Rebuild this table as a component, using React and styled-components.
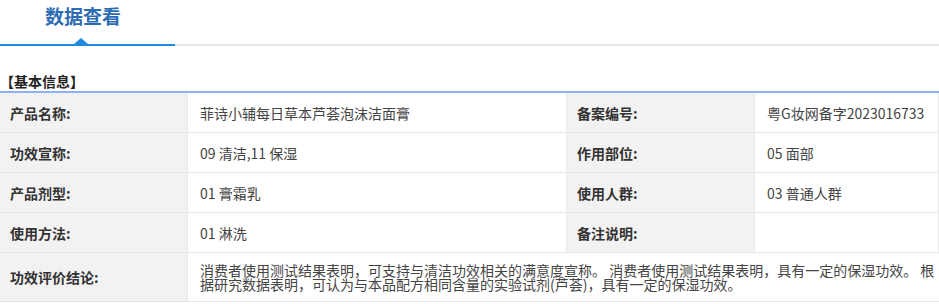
import React from 'react';
import styled, { createGlobalStyle } from 'styled-components';

const GlobalStyle = createGlobalStyle`
  body {
    margin: 0;
    background: #fff;
    font-family: "Noto Sans CJK SC", "Noto Sans", sans-serif;
    color: #333;
  }
`;

const TabBar = styled.div`
  display: flex;
  border-bottom: 2px solid #e6e6e6;
  height: 44px;
`;

const Tab = styled.div`
  position: relative;
  width: 175px;
  box-sizing: border-box;
  padding-left: 45px;
  font-size: 19px;
  font-weight: bold;
  line-height: 32px;
  color: #2d6cb4;
  border-bottom: 2px solid #1e88e0;
  margin-bottom: -2px;

  &::after {
    content: '';
    position: absolute;
    left: 74px;
    bottom: 0;
    border-left: 7px solid transparent;
    border-right: 7px solid transparent;
    border-bottom: 6px solid #1e88e0;
  }
`;

const Section = styled.div`
  margin-top: 26px;
`;

const SectionTitle = styled.div`
  font-size: 14px;
  font-weight: bold;
  line-height: 19px;
  color: #222;
  border-bottom: 2px solid #8fb2f2;
`;

const Grid = styled.div`
  display: grid;
  grid-template-columns: 188px 379px 188px 1fr;
`;

const Cell = styled.div`
  box-sizing: border-box;
  height: ${p => (p.$tall ? '49px' : '40px')};
  display: flex;
  align-items: center;
  padding-left: ${p => (p.$label ? '10px' : '12px')};
  font-size: 14px;
  line-height: 14px;
  border-bottom: 1px solid #e6e6e6;
  border-right: 1px solid #e9e9e9;
  background: ${p => (p.$label ? '#f2f2f2' : '#fff')};
  font-weight: ${p => (p.$label ? 'bold' : 'normal')};
  color: ${p => (p.$label ? '#333' : '#444')};
  grid-column: ${p => p.$span || 'auto'};

  &:last-child {
    border-right: none;
  }
`;

const rows = [
  ['产品名称:', '菲诗小辅每日草本芦荟泡沫洁面膏', '备案编号:', '粤G妆网备字2023016733'],
  ['功效宣称:', '09 清洁,11 保湿', '作用部位:', '05 面部'],
  ['产品剂型:', '01 膏霜乳', '使用人群:', '03 普通人群'],
  ['使用方法:', '01 淋洗', '备注说明:', ''],
];

const conclusion =
  '消费者使用测试结果表明，可支持与清洁功效相关的满意度宣称。 消费者使用测试结果表明，具有一定的保湿功效。 根据研究数据表明，可认为与本品配方相同含量的实验试剂(芦荟)，具有一定的保湿功效。';

export default function App() {
  return (
    <>
      <GlobalStyle />
      <TabBar>
        <Tab>数据查看</Tab>
      </TabBar>
      <Section>
        <SectionTitle>【基本信息】</SectionTitle>
        <Grid>
          {rows.map(([l1, v1, l2, v2]) => (
            <React.Fragment key={l1}>
              <Cell $label>{l1}</Cell>
              <Cell>{v1}</Cell>
              <Cell $label>{l2}</Cell>
              <Cell>{v2}</Cell>
            </React.Fragment>
          ))}
          <Cell $label $tall>功效评价结论:</Cell>
          <Cell $tall $span="2 / 5">{conclusion}</Cell>
        </Grid>
      </Section>
    </>
  );
}
